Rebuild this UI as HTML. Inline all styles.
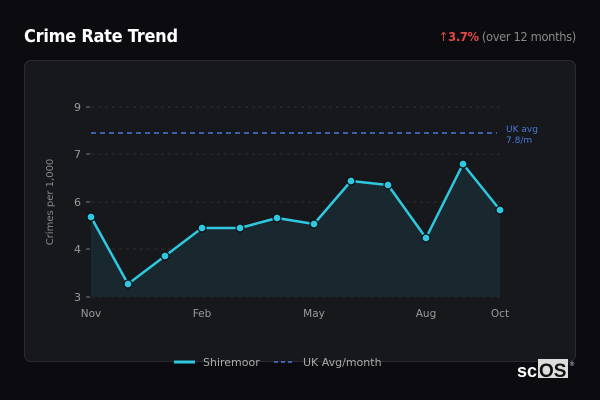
<!DOCTYPE html>
<html><head><meta charset="utf-8"><style>
html,body{margin:0;padding:0;width:600px;height:400px;background:#0c0c10;overflow:hidden;font-family:"Liberation Sans","DejaVu Sans",sans-serif}
.t{position:absolute;left:24px;top:26px;font-size:18px;font-weight:bold;color:#fff;font-family:"DejaVu Sans",sans-serif;letter-spacing:-0.3px;transform:scaleX(0.9);transform-origin:left}
.r{position:absolute;right:24px;top:29px;font-size:12.5px;color:#888;font-family:"DejaVu Sans",sans-serif;letter-spacing:-0.4px;transform:scaleX(0.92);transform-origin:right}
.r b{color:#e04848}
.card{position:absolute;left:24px;top:60px;width:550px;height:300px;background:#17181c;border:1px solid #2a2b30;border-radius:7px}
svg{position:absolute;left:0;top:0}
</style></head><body>
<div class="t">Crime Rate Trend</div>
<div class="r"><span style="color:#e04848">↑</span><b>3.7%</b> (over 12 months)</div>
<div class="card"></div>
<svg width="600" height="400" font-family="DejaVu Sans, sans-serif">
<g stroke="#2c2d32" stroke-dasharray="3,4" stroke-width="1">
<line x1="91" y1="107" x2="503" y2="107"/><line x1="91" y1="154" x2="503" y2="154"/>
<line x1="91" y1="202" x2="503" y2="202"/><line x1="91" y1="249" x2="503" y2="249"/>
<line x1="91" y1="297" x2="503" y2="297"/></g>
<g stroke="#777" stroke-width="1"><line x1="86" y1="107" x2="90" y2="107"/><line x1="86" y1="154" x2="90" y2="154"/><line x1="86" y1="202" x2="90" y2="202"/><line x1="86" y1="249" x2="90" y2="249"/><line x1="86" y1="297" x2="90" y2="297"/></g>
<g fill="#999" font-size="11" text-anchor="end"><text x="81" y="111">9</text><text x="81" y="158">7</text><text x="81" y="206">6</text><text x="81" y="253">4</text><text x="81" y="301">3</text></g>
<text transform="translate(53,202) rotate(-90)" fill="#888" font-size="10" text-anchor="middle">Crimes per 1,000</text>
<g fill="#999" font-size="10.5" text-anchor="middle"><text x="91" y="317">Nov</text><text x="202" y="317">Feb</text><text x="314" y="317">May</text><text x="426" y="317">Aug</text><text x="500" y="317">Oct</text></g>
<polygon fill="#19282f" points="91,217 128,284 165,256 202,228 240,228 277,218 314,224 351,181 388,185 426,238 463,164 500,210 500,297 91,297"/>
<line x1="91" y1="133" x2="497" y2="133" stroke="#4a78d8" stroke-width="1.5" stroke-dasharray="5,4"/>
<text x="506" y="132" fill="#4a78d8" font-size="9">UK avg</text><text x="506" y="143" fill="#4a78d8" font-size="9">7.8/m</text>
<polyline fill="none" stroke="#2ec8e0" stroke-width="2.5" stroke-linejoin="round" points="91,217 128,284 165,256 202,228 240,228 277,218 314,224 351,181 388,185 426,238 463,164 500,210"/>
<g fill="#2ec8e0" stroke="#0c0c10" stroke-width="1.2">
<circle cx="91" cy="217" r="4"/><circle cx="128" cy="284" r="4"/><circle cx="165" cy="256" r="4"/><circle cx="202" cy="228" r="4"/><circle cx="240" cy="228" r="4"/><circle cx="277" cy="218" r="4"/><circle cx="314" cy="224" r="4"/><circle cx="351" cy="181" r="4"/><circle cx="388" cy="185" r="4"/><circle cx="426" cy="238" r="4"/><circle cx="463" cy="164" r="4"/><circle cx="500" cy="210" r="4"/></g>
<line x1="174" y1="362" x2="195" y2="362" stroke="#2ec8e0" stroke-width="3"/>
<text x="203" y="366" fill="#aaa" font-size="11">Shiremoor</text>
<line x1="274" y1="362" x2="295" y2="362" stroke="#4a78d8" stroke-width="1.5" stroke-dasharray="4,3"/>
<text x="303" y="366" fill="#aaa" font-size="11">UK Avg/month</text>
<text x="517" y="377" fill="#fff" font-size="18" font-weight="bold" font-family="Liberation Sans, sans-serif">sc</text>
<rect x="538" y="359" width="30" height="19" fill="#ddd"/>
<text x="539" y="377" fill="#111" font-size="19" font-weight="bold" font-family="Liberation Sans, sans-serif">OS</text>
<text x="569" y="366" fill="#ccc" font-size="6">®</text>
</svg>
</body></html>
